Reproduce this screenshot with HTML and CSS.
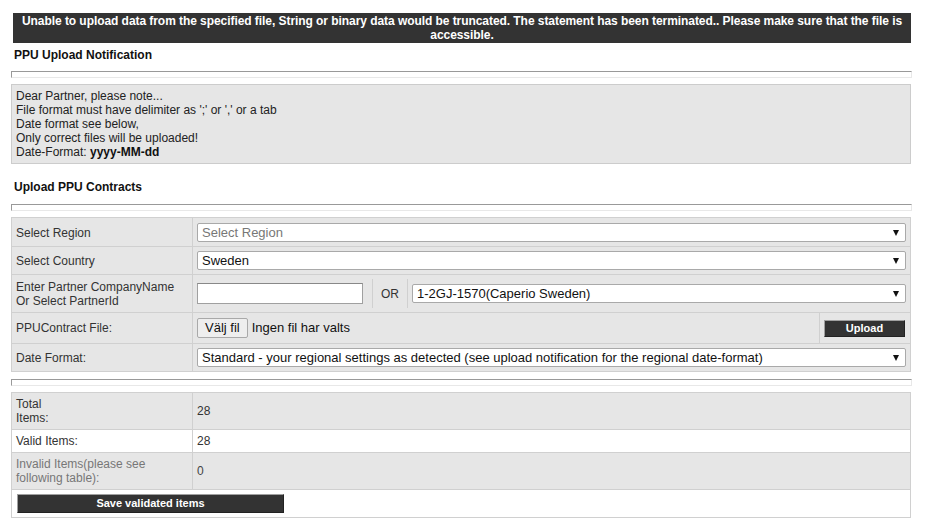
FILE: index.html
```html
<!DOCTYPE html>
<html>
<head>
<meta charset="utf-8">
<link rel="stylesheet" href="styles.css">
</head>
<body>
<div class="page">
  <div class="error-bar">Unable to upload data from the specified file, String or binary data would be truncated. The statement has been terminated.. Please make sure that the file is accessible.</div>

  <h2 class="section-title first">PPU Upload Notification</h2>
  <div class="rule"></div>
  <div class="notice">
    Dear Partner, please note...<br>
    File format must have delimiter as ';' or ',' or a tab<br>
    Date format see below,<br>
    Only correct files will be uploaded!<br>
    Date-Format: <b>yyyy-MM-dd</b>
  </div>

  <h2 class="section-title">Upload PPU Contracts</h2>
  <div class="rule"></div>

  <table class="form-table">
    <tr class="r1">
      <td class="label">Select Region</td>
      <td class="value"><div class="select placeholder"><span>Select Region</span><i class="arrow"></i></div></td>
    </tr>
    <tr class="r2">
      <td class="label">Select Country</td>
      <td class="value"><div class="select"><span>Sweden</span><i class="arrow"></i></div></td>
    </tr>
    <tr class="r3">
      <td class="label">Enter Partner CompanyName<br>Or Select PartnerId</td>
      <td class="value split">
        <div class="split-row">
          <div class="part part-input"><div class="textbox"></div></div>
          <div class="part part-or">OR</div>
          <div class="part part-select"><div class="select"><span>1-2GJ-1570(Caperio Sweden)</span><i class="arrow"></i></div></div>
        </div>
      </td>
    </tr>
    <tr class="r4">
      <td class="label">PPUContract File:</td>
      <td class="value split">
        <div class="split-row">
          <div class="part part-file"><span class="file-btn">Välj fil</span><span class="file-name">Ingen fil har valts</span></div>
          <div class="part part-upload"><span class="dark-btn upload">Upload</span></div>
        </div>
      </td>
    </tr>
    <tr class="r5">
      <td class="label">Date Format:</td>
      <td class="value"><div class="select"><span>Standard - your regional settings as detected (see upload notification for the regional date-format)</span><i class="arrow"></i></div></td>
    </tr>
  </table>

  <div class="rule"></div>

  <table class="result-table">
    <tr class="grey tall">
      <td class="label">Total<br>Items:</td>
      <td class="value">28</td>
    </tr>
    <tr class="white">
      <td class="label">Valid Items:</td>
      <td class="value">28</td>
    </tr>
    <tr class="grey tall muted">
      <td class="label">Invalid Items(please see<br>following table):</td>
      <td class="value">0</td>
    </tr>
    <tr class="white">
      <td class="btn-cell" colspan="2"><span class="dark-btn save">Save validated items</span></td>
    </tr>
  </table>
</div>
</body>
</html>
```

FILE: styles.css
```css
html, body {
  margin: 0;
  padding: 0;
  background: #ffffff;
}

body {
  font-family: "Liberation Sans", Arial, sans-serif;
  font-size: 12px;
  color: #222;
}

.page {
  padding: 13px 0 0 11px;
  width: 901px;
}

.error-bar {
  margin-left: 2px;
  width: 898px;
  box-sizing: border-box;
  background: #333333;
  color: #ffffff;
  font-weight: bold;
  text-align: center;
  line-height: 14px;
  padding: 1px 4px;
  letter-spacing: -0.06px;
}

.section-title {
  font-size: 12px;
  font-weight: bold;
  line-height: 14px;
  margin: 16px 0 10px 3px;
  color: #111;
}

.section-title.first {
  margin-top: 5px;
  margin-bottom: 9px;
}

.rule {
  height: 5px;
  border: 1px solid;
  border-color: #999999 #e8e8e8 #e8e8e8 #999999;
  margin-bottom: 6px;
}

.notice {
  background: #e6e6e6;
  border: 1px solid #cccccc;
  padding: 4px 4px;
  line-height: 14px;
  margin-right: 1px;
  color: #222;
}

.notice b {
  color: #111;
}

table {
  width: 900px;
  border-collapse: collapse;
  font-size: 12px;
}

td {
  border: 1px solid #d0d0d0;
  padding: 4px;
  vertical-align: middle;
  line-height: 14px;
}

.form-table td {
  background: #e6e6e6;
}

.label {
  width: 172px;
  color: #333;
}

.form-table {
  margin-bottom: 7px;
}

.form-table .r1 td {
  padding-top: 5px;
}

.form-table .r3 td.label {
  padding-top: 5px;
}

.form-table .r4 td.label {
  padding-top: 5px;
  padding-bottom: 5px;
}

.form-table td.split {
  padding: 0;
}

.select {
  height: 19px;
  box-sizing: border-box;
  background: #fff;
  border: 1px solid #a9a9a9;
  border-radius: 2px;
  display: flex;
  align-items: center;
  padding: 0 6px 0 4px;
  font-size: 13px;
  color: #111;
}

.select span {
  flex: 1;
  white-space: nowrap;
}

.select.placeholder {
  color: #777;
}

.arrow {
  width: 0;
  height: 0;
  border-left: 3px solid transparent;
  border-right: 3px solid transparent;
  border-top: 6px solid #111;
}

.split-row {
  display: flex;
  align-items: stretch;
}

.part {
  padding: 4px;
  display: flex;
  align-items: center;
}

.part-input {
  width: 171px;
  border-right: 1px solid #d0d0d0;
}

.textbox {
  width: 166px;
  height: 21px;
  box-sizing: border-box;
  background: #fff;
  border: 1px solid #a0a0a0;
  border-top-color: #888;
}

.part-or {
  width: 26px;
  border-right: 1px solid #d0d0d0;
  justify-content: center;
  color: #333;
}

.part-select {
  flex: 1;
}

.part-select .select {
  flex: 1;
}

.part-file {
  flex: 1;
  border-right: 1px solid #d0d0d0;
  padding-top: 5px;
  padding-bottom: 5px;
}

.file-btn {
  display: inline-block;
  height: 20px;
  box-sizing: border-box;
  padding: 0 7px;
  line-height: 18px;
  background: #eeeeee;
  border: 1px solid #a9a9a9;
  border-radius: 2px;
  font-size: 13px;
  color: #111;
}

.file-name {
  margin-left: 4px;
  font-size: 13px;
  color: #111;
}

.part-upload {
  width: 82px;
}

.dark-btn {
  display: inline-block;
  box-sizing: border-box;
  background: #333333;
  color: #fff;
  font-weight: bold;
  font-size: 11px;
  text-align: center;
  border: 1px solid;
  border-color: #a0a0a0 #222 #222 #a0a0a0;
  line-height: 15px;
}

.upload {
  width: 81px;
  height: 17px;
}

.result-table td {
  background: #e6e6e6;
}

.result-table tr.white td {
  background: #ffffff;
}

.result-table tr.tall td {
  height: 27px;
}

.result-table tr.white td {
  padding-top: 4px;
  padding-bottom: 4px;
}

.result-table .muted td {
  color: #777;
}

.result-table .value {
  color: #333;
}

.result-table .muted .value {
  color: #444;
}

.result-table td.btn-cell {
  padding: 4px 5px 4px 5px;
}

.save {
  width: 267px;
  height: 19px;
  line-height: 17px;
}
```
